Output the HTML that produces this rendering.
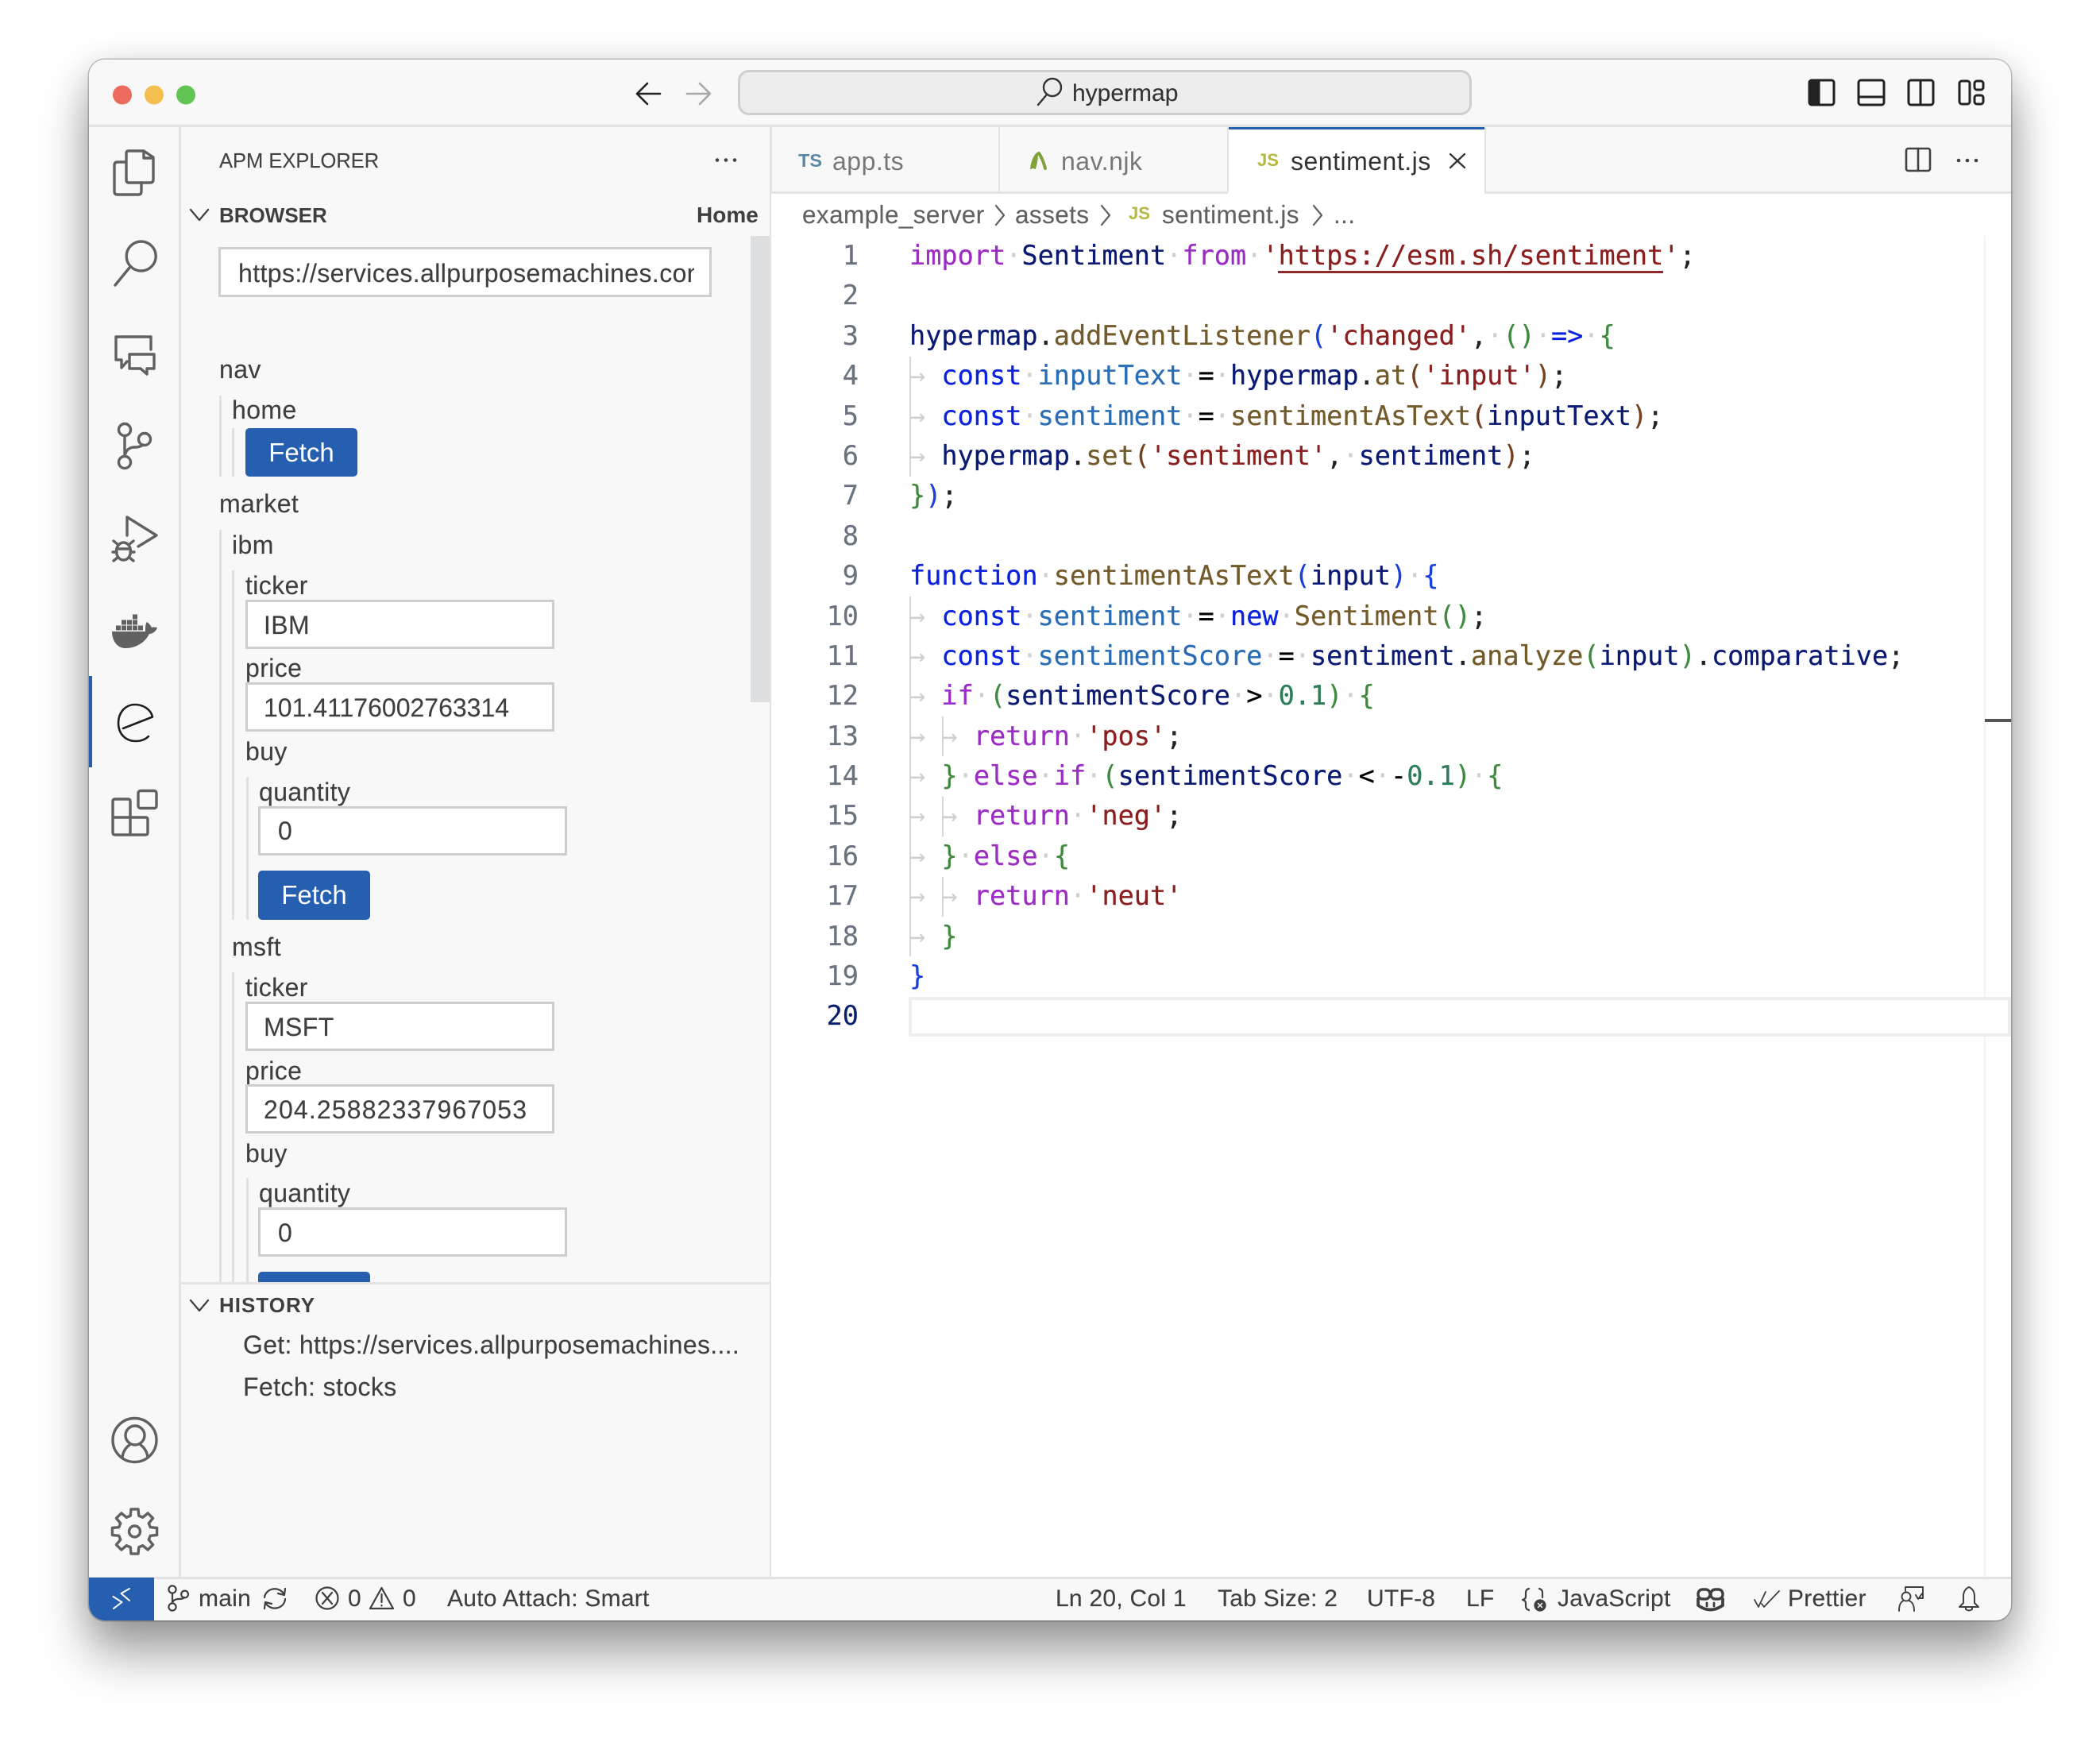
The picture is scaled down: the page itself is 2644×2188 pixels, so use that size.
<!DOCTYPE html>
<html><head><meta charset="utf-8"><title>hypermap</title>
<style>
html,body{margin:0;padding:0;background:#fff;width:2644px;height:2188px;overflow:hidden}
body{position:relative;font-family:"Liberation Sans",sans-serif;color:#3f3f3f}
#shadow{position:absolute;left:112px;top:75px;width:2420px;height:1965px;border-radius:20px;background:#f8f8f8;
box-shadow:0 0 0 1.5px rgba(0,0,0,.22),0 42px 62px rgba(0,0,0,.36),0 6px 44px rgba(0,0,0,.15)}
#win{position:absolute;left:0;top:0;width:2644px;height:2188px;clip-path:inset(75px 112px 148px 112px round 20px)}
.a{position:absolute}
.t{position:absolute;white-space:pre;line-height:40px;height:40px;margin-top:-20px;font-size:32px;letter-spacing:.4px;color:#3f3f3f;-webkit-text-stroke:.15px #3f3f3f}
.i{position:absolute;background:#fff;border:3px solid #cecece;box-sizing:border-box}
.l{position:absolute;width:2.5px;background:#e0e0e0}
.btn{position:absolute;background:#265fb0;border-radius:5px;color:#fff;font-size:33px;text-align:center;overflow:hidden}
.h{font-weight:bold;font-size:26px;letter-spacing:0;-webkit-text-stroke:0}
.st{font-size:30px;letter-spacing:.25px}
.bc{font-size:31.5px;color:#616161;letter-spacing:.4px;-webkit-text-stroke:.15px #616161}
.tb{font-size:32px;letter-spacing:.5px;color:#777;-webkit-text-stroke:0}
.ic{font-weight:bold;letter-spacing:0;-webkit-text-stroke:0}
#code{position:absolute;left:1145px;top:297px;font-family:"DejaVu Sans Mono","Liberation Mono",monospace;font-size:33.55px;line-height:50.4px;white-space:pre;color:#222;-webkit-text-stroke:.25px}
#code div{height:50.4px}
#nums{position:absolute;left:1000px;width:81px;top:297px;text-align:right;font-family:"DejaVu Sans Mono","Liberation Mono",monospace;font-size:33.55px;line-height:50.4px;color:#6b7380;-webkit-text-stroke:.2px}
#nums div{height:50.4px}
i{font-style:normal}
.k{color:#9b2cc4}.b{color:#0a22dc}.n{color:#0a1a72}.c{color:#2a6db5}.f{color:#725a2a}.s{color:#8b1f1f}.g{color:#3f8a3f}.u{color:#1a3fdc}.r{color:#75401f}.o{color:#000}.d{color:#cfcfcf;-webkit-text-stroke:0}.m{color:#2e7d5a}
svg{position:absolute;left:0;top:0}
</style></head><body>
<div id="shadow"></div>
<div id="win">
<div class="a" style="left:112px;top:75px;width:2420px;height:1965px;background:#f8f8f8"></div>
<!-- title bar border -->
<div class="a" style="left:112px;top:157px;width:2420px;height:3px;background:#e4e4e4"></div>
<div class="a" style="left:929px;top:88px;width:924px;height:57px;background:#ededed;border:3px solid #cfcfcf;border-radius:14px;box-sizing:border-box"></div>
<div class="t" style="left:1350px;top:117.5px;font-size:30px;letter-spacing:0;color:#333">hypermap</div>

<!-- structure -->
<div class="a" style="left:225px;top:160px;width:2.5px;height:1826px;background:#e4e4e4"></div>
<div class="a" style="left:969px;top:160px;width:2.5px;height:1826px;background:#e4e4e4"></div>
<div class="a" style="left:971px;top:243px;width:1561px;height:1743px;background:#fff"></div>
<div class="a" style="left:971px;top:241px;width:1561px;height:3px;background:#e4e4e4"></div>
<div class="a" style="left:1546px;top:160px;width:323px;height:84px;background:#fff"></div>
<div class="a" style="left:1546px;top:160px;width:323px;height:3px;background:#265fb0"></div>
<div class="a" style="left:1257px;top:160px;width:2px;height:82px;background:#e4e4e4"></div>
<div class="a" style="left:1545px;top:160px;width:2px;height:82px;background:#e4e4e4"></div>
<div class="a" style="left:1869px;top:160px;width:2px;height:82px;background:#e4e4e4"></div>

<!-- tabs -->
<div class="t ic" style="left:1005px;top:202px;font-size:23.5px;color:#5a87a3">TS</div>
<div class="t tb" style="left:1048px;top:203px">app.ts</div>
<div class="t tb" style="left:1336px;top:203px">nav.njk</div>
<div class="t ic" style="left:1583px;top:202px;font-size:22px;color:#b5b83c">JS</div>
<div class="t tb" style="left:1625px;top:203px;color:#333">sentiment.js</div>

<!-- breadcrumbs -->
<div class="t bc" style="left:1010px;top:270px">example_server</div>
<div class="t bc" style="left:1278px;top:270px">assets</div>
<div class="t ic" style="left:1421px;top:269px;font-size:22px;color:#b5b83c">JS</div>
<div class="t bc" style="left:1463px;top:270px">sentiment.js</div>
<div class="t bc" style="left:1679px;top:270px">...</div>

<!-- sidebar -->
<div class="t" style="left:276px;top:203px;font-size:25.5px;letter-spacing:0;color:#444">APM EXPLORER</div>
<div class="t h" style="left:276px;top:271px">BROWSER</div>
<div class="t h" style="left:877px;top:271px;font-size:28px">Home</div>
<div class="a" style="left:945px;top:297px;width:24px;height:587px;background:#dedfe1"></div>

<div class="i" style="left:275px;top:311px;width:621px;height:63px"></div>
<div class="a" style="left:300px;top:320px;width:574px;height:46px;overflow:hidden"><div class="t" style="left:0;top:23.5px">https://services.allpurposemachines.com/</div></div>

<div class="t" style="left:276px;top:465px">nav</div>
<div class="l" style="left:276px;top:498px;height:102px"></div>
<div class="t" style="left:292px;top:516px">home</div>
<div class="l" style="left:292px;top:539px;height:61px"></div>
<div class="btn" style="left:309px;top:539px;width:141px;height:61px;line-height:61px">Fetch</div>
<div class="t" style="left:276px;top:634px">market</div>
<div class="l" style="left:276px;top:667px;height:947px"></div>
<div class="t" style="left:292px;top:686px">ibm</div>
<div class="l" style="left:292px;top:718px;height:440px"></div>
<div class="t" style="left:309px;top:737px">ticker</div>
<div class="i" style="left:309px;top:755px;width:389px;height:62px"></div>
<div class="t" style="left:332px;top:787px">IBM</div>
<div class="t" style="left:309px;top:841px">price</div>
<div class="i" style="left:309px;top:859px;width:389px;height:62px"></div>
<div class="t" style="left:332px;top:891px;letter-spacing:0">101.41176002763314</div>
<div class="t" style="left:309px;top:946px">buy</div>
<div class="l" style="left:310px;top:978px;height:180px"></div>
<div class="t" style="left:326px;top:997px">quantity</div>
<div class="i" style="left:325px;top:1015px;width:389px;height:62px"></div>
<div class="t" style="left:350px;top:1046px">0</div>
<div class="btn" style="left:325px;top:1096px;width:141px;height:62px;line-height:62px">Fetch</div>
<div class="t" style="left:292px;top:1192px">msft</div>
<div class="l" style="left:292px;top:1224px;height:390px"></div>
<div class="t" style="left:309px;top:1243px">ticker</div>
<div class="i" style="left:309px;top:1261px;width:389px;height:62px"></div>
<div class="t" style="left:332px;top:1293px">MSFT</div>
<div class="t" style="left:309px;top:1348px">price</div>
<div class="i" style="left:309px;top:1365px;width:389px;height:62px"></div>
<div class="t" style="left:332px;top:1397px;letter-spacing:1.15px">204.25882337967053</div>
<div class="t" style="left:309px;top:1452px">buy</div>
<div class="l" style="left:310px;top:1483px;height:131px"></div>
<div class="t" style="left:326px;top:1502px">quantity</div>
<div class="i" style="left:325px;top:1520px;width:389px;height:62px"></div>
<div class="t" style="left:350px;top:1552px">0</div>
<div class="btn" style="left:325px;top:1601px;width:141px;height:13px;border-radius:5px 5px 0 0"></div>

<div class="a" style="left:226px;top:1614px;width:744px;height:3px;background:#e4e4e4"></div>
<div class="t h" style="left:276px;top:1643px;letter-spacing:1px">HISTORY</div>
<div class="t" style="left:306px;top:1693px;letter-spacing:.3px">Get: https://services.allpurposemachines....</div>
<div class="t" style="left:306px;top:1746px">Fetch: stocks</div>

<!-- code -->
<div class="a" style="left:2498px;top:297px;width:2px;height:1689px;background:#f4f4f4"></div>
<div class="a" style="left:1144px;top:1255px;width:1388px;height:50px;border:4px solid #eeeeee;box-sizing:border-box;background:#fff"></div>
<div class="a" style="left:2499px;top:905px;width:33px;height:4px;background:#555"></div>
<div class="a" style="left:1145px;top:448.6px;width:2px;height:151.2px;background:#d6d6d6"></div>
<div class="a" style="left:1145px;top:750.8px;width:2px;height:453.6px;background:#d6d6d6"></div>
<div class="a" style="left:1185.5px;top:902px;width:2px;height:50.4px;background:#d6d6d6"></div>
<div class="a" style="left:1185.5px;top:1002.8px;width:2px;height:50.4px;background:#d6d6d6"></div>
<div class="a" style="left:1185.5px;top:1103.6px;width:2px;height:50.4px;background:#d6d6d6"></div>
<div class="a" style="left:1609px;top:341px;width:485px;height:3px;background:#8f2a2a"></div>

<div id="nums"><div>1</div><div>2</div><div>3</div><div>4</div><div>5</div><div>6</div><div>7</div><div>8</div><div>9</div><div>10</div><div>11</div><div>12</div><div>13</div><div>14</div><div>15</div><div>16</div><div>17</div><div>18</div><div>19</div><div style="color:#0b216f">20</div></div>
<div id="code"><div><i class="k">import</i><i class="d">·</i><i class="n">Sentiment</i><i class="d">·</i><i class="k">from</i><i class="d">·</i><i class="s">'https://esm.sh/sentiment'</i>;</div><div> </div><div><i class="n">hypermap</i>.<i class="f">addEventListener</i><i class="u">(</i><i class="s">'changed'</i>,<i class="d">·</i><i class="g">()</i><i class="d">·</i><i class="b">=&gt;</i><i class="d">·</i><i class="g">{</i></div><div><i class="d">→ </i><i class="b">const</i><i class="d">·</i><i class="c">inputText</i><i class="d">·</i><i class="o">=</i><i class="d">·</i><i class="n">hypermap</i>.<i class="f">at</i><i class="r">(</i><i class="s">'input'</i><i class="r">)</i>;</div><div><i class="d">→ </i><i class="b">const</i><i class="d">·</i><i class="c">sentiment</i><i class="d">·</i><i class="o">=</i><i class="d">·</i><i class="f">sentimentAsText</i><i class="r">(</i><i class="n">inputText</i><i class="r">)</i>;</div><div><i class="d">→ </i><i class="n">hypermap</i>.<i class="f">set</i><i class="r">(</i><i class="s">'sentiment'</i>,<i class="d">·</i><i class="n">sentiment</i><i class="r">)</i>;</div><div><i class="g">}</i><i class="u">)</i>;</div><div> </div><div><i class="b">function</i><i class="d">·</i><i class="f">sentimentAsText</i><i class="u">(</i><i class="n">input</i><i class="u">)</i><i class="d">·</i><i class="u">{</i></div><div><i class="d">→ </i><i class="b">const</i><i class="d">·</i><i class="c">sentiment</i><i class="d">·</i><i class="o">=</i><i class="d">·</i><i class="b">new</i><i class="d">·</i><i class="f">Sentiment</i><i class="g">()</i>;</div><div><i class="d">→ </i><i class="b">const</i><i class="d">·</i><i class="c">sentimentScore</i><i class="d">·</i><i class="o">=</i><i class="d">·</i><i class="n">sentiment</i>.<i class="f">analyze</i><i class="g">(</i><i class="n">input</i><i class="g">)</i>.<i class="n">comparative</i>;</div><div><i class="d">→ </i><i class="k">if</i><i class="d">·</i><i class="g">(</i><i class="n">sentimentScore</i><i class="d">·</i><i class="o">&gt;</i><i class="d">·</i><i class="m">0.1</i><i class="g">)</i><i class="d">·</i><i class="g">{</i></div><div><i class="d">→ → </i><i class="k">return</i><i class="d">·</i><i class="s">'pos'</i>;</div><div><i class="d">→ </i><i class="g">}</i><i class="d">·</i><i class="k">else</i><i class="d">·</i><i class="k">if</i><i class="d">·</i><i class="g">(</i><i class="n">sentimentScore</i><i class="d">·</i><i class="o">&lt;</i><i class="d">·</i><i class="o">-</i><i class="m">0.1</i><i class="g">)</i><i class="d">·</i><i class="g">{</i></div><div><i class="d">→ → </i><i class="k">return</i><i class="d">·</i><i class="s">'neg'</i>;</div><div><i class="d">→ </i><i class="g">}</i><i class="d">·</i><i class="k">else</i><i class="d">·</i><i class="g">{</i></div><div><i class="d">→ → </i><i class="k">return</i><i class="d">·</i><i class="s">'neut'</i></div><div><i class="d">→ </i><i class="g">}</i></div><div><i class="u">}</i></div></div>

<!-- status bar -->
<div class="a" style="left:112px;top:1985px;width:2420px;height:3px;background:#e2e2e2"></div>
<div class="a" style="left:112px;top:1986px;width:82px;height:54px;background:#265fb0"></div>
<div class="t st" style="left:250px;top:2013px">main</div>
<div class="t st" style="left:438px;top:2013px">0</div>
<div class="t st" style="left:507px;top:2013px">0</div>
<div class="t st" style="left:563px;top:2013px">Auto Attach: Smart</div>
<div class="t st" style="left:1329px;top:2013px">Ln 20, Col 1</div>
<div class="t st" style="left:1533px;top:2013px">Tab Size: 2</div>
<div class="t st" style="left:1721px;top:2013px">UTF-8</div>
<div class="t st" style="left:1846px;top:2013px">LF</div>
<div class="t st" style="left:1961px;top:2013px">JavaScript</div>
<div class="t st" style="left:2251px;top:2013px">Prettier</div>

<svg width="2644" height="2188" viewBox="0 0 2644 2188" fill="none" stroke-linecap="round" stroke-linejoin="round">
<!-- traffic lights -->
<circle cx="154" cy="119.5" r="12" fill="#ec6a5e"/><circle cx="194" cy="119.5" r="12" fill="#f4bf4f"/><circle cx="234" cy="119.5" r="12" fill="#61c554"/>
<!-- nav arrows -->
<path d="M831 118H803M815 105L802 118L815 131" stroke="#222" stroke-width="2.6"/>
<path d="M865 118H893M881 105L894 118L881 131" stroke="#a8a8a8" stroke-width="2.6"/>
<!-- title search -->
<circle cx="1325" cy="110" r="11" stroke="#333" stroke-width="2.4"/><path d="M1318 119L1307 132" stroke="#333" stroke-width="2.4"/>
<!-- layout icons -->
<g stroke="#222" stroke-width="3">
<rect x="2278" y="101" width="31" height="31" rx="3"/><path d="M2279 102H2290V131H2279Z" fill="#222"/>
<rect x="2340" y="101" width="32" height="31" rx="3"/><path d="M2340 122H2372"/>
<rect x="2403" y="101" width="31" height="31" rx="3"/><path d="M2418 101V132"/>
<rect x="2467" y="102" width="13" height="29" rx="3"/><rect x="2486" y="102" width="11" height="11" rx="3"/><rect x="2486" y="120" width="11" height="11" rx="3"/>
</g>
<!-- editor actions -->
<g stroke="#424242" stroke-width="2.6"><rect x="2400" y="187" width="30" height="28" rx="2.5"/><path d="M2415 187V215"/></g>
<g fill="#424242"><circle cx="2466" cy="202" r="2.3"/><circle cx="2477" cy="202" r="2.3"/><circle cx="2488" cy="202" r="2.3"/>
<circle cx="903" cy="201.5" r="2.3"/><circle cx="914" cy="201.5" r="2.3"/><circle cx="925" cy="201.5" r="2.3"/></g>
<path d="M1826 194L1844 211M1844 194L1826 211" stroke="#333" stroke-width="2.3"/>
<!-- njk -->
<path d="M1298 212Q1300 198 1306 193Q1306 203 1303 212" fill="#7fa33a" stroke="#7fa33a" stroke-width="2"/>
<path d="M1308 193Q1313 200 1316 212" stroke="#7fa33a" stroke-width="4"/>
<!-- breadcrumb chevrons -->
<g stroke="#616161" stroke-width="2.2"><path d="M1254 259L1264 271L1254 283"/><path d="M1387 259L1397 271L1387 283"/><path d="M1654 259L1664 271L1654 283"/></g>
<!-- section chevrons -->
<g stroke="#424242" stroke-width="2.3"><path d="M240 264L251 277L262 264"/><path d="M240 1637L251 1650L262 1637"/></g>

<!-- activity bar -->
<g stroke="#616161" stroke-width="3.4">
<path d="M158 204H148Q144 204 144 208V241Q144 245 148 245H174Q178 245 178 241V230"/>
<path d="M181 190H162Q159 190 159 193V226Q159 230 162 230H189Q193 230 193 226V198ZM181 190V199H193"/>
<circle cx="177.7" cy="322.5" r="18.5"/><path d="M163 337L145 359"/>
<path d="M190 440V424H146V453H153V463L160 455"/>
<path d="M163 446H194V464H185V471L177 464H163Z"/>
<circle cx="157" cy="541" r="7.5"/><circle cx="182" cy="553" r="7.5"/><circle cx="157" cy="582" r="7.5"/>
<path d="M157 549V574M158 571Q160 564 168 563H172Q178 562 180 560"/>
<path d="M160 674V651L197 674L174 688"/>
<ellipse cx="155.5" cy="694" rx="9" ry="11"/><path d="M147 691H164M143 681L149 686M168 681L162 686M142 695H147M169 695H164M143 706L148 702M168 706L163 702"/>
<rect x="174" y="995.5" width="23" height="22" rx="3"/>
<path d="M164 1029V1009Q164 1006 161 1006H145Q142 1006 142 1009V1048Q142 1051 145 1051H183Q186 1051 186 1048V1032Q186 1029 183 1029H142M164 1029V1051"/>
<circle cx="169.5" cy="1813" r="27.5"/><ellipse cx="170" cy="1807" rx="12" ry="12"/>
<path d="M154 1835Q155 1825 163 1819M186 1835Q185 1825 177 1819"/>
<g transform="translate(169.5 1928)"><path d="M-5.3 -19.8L-4.5 -28.1L4.5 -28.1L5.3 -19.8L10.25 -17.75L16.69 -23.05L23.05 -16.69L17.75 -10.25L19.8 -5.3L28.1 -4.5L28.1 4.5L19.8 5.3L17.75 10.25L23.05 16.69L16.69 23.05L10.25 17.75L5.3 19.8L4.5 28.1L-4.5 28.1L-5.3 19.8L-10.25 17.75L-16.69 23.05L-23.05 16.69L-17.75 10.25L-19.8 5.3L-28.1 4.5L-28.1 -4.5L-19.8 -5.3L-17.75 -10.25L-23.05 -16.69L-16.69 -23.05L-10.25 -17.75Z"/><circle r="7"/></g>
</g>
<!-- docker -->
<g fill="#616161"><path d="M141 795H183C183 790 183 785 185 783C188 785 190 788 191 790C194 789 196 790 198 790C196 796 191 798 188 798C182 810 170 816 158 816C147 816 141 806 141 795Z"/>
<rect x="146" y="787.5" width="6" height="6"/><rect x="153" y="787.5" width="6" height="6"/><rect x="160" y="787.5" width="6" height="6"/><rect x="167" y="787.5" width="6" height="6"/><rect x="174" y="787.5" width="6" height="6"/>
<rect x="153" y="780.5" width="6" height="6"/><rect x="160" y="780.5" width="6" height="6"/><rect x="167" y="780.5" width="6" height="6"/><rect x="167" y="773.5" width="6" height="6"/></g>
<!-- e / active -->
<rect x="112" y="851" width="4" height="115" fill="#265fb0"/>
<path d="M155 917L192 902.5C190 893 180 887 170 887C157 887 149 898 149 910C149 924 158 933 171 933C178 933 183 931 187 927" stroke="#1e1e1e" stroke-width="2.6"/>

<!-- status icons -->
<path d="M142.5 2010L153.5 2017L143 2025M163 2000L152.5 2006L163 2015" stroke="#fff" stroke-width="2"/>
<g stroke="#3f3f3f" stroke-width="2.2">
<circle cx="217" cy="2001" r="4.6"/><circle cx="232.6" cy="2007" r="4.4"/><circle cx="217" cy="2023" r="4.6"/>
<path d="M217 2006V2018M218 2016Q220 2013 225 2013Q231 2013 232 2011"/>
<path d="M333 2011A13 12 0 0 1 357 2006M359 2013A13 12 0 0 1 335 2019M359 2000L358 2008L350 2006M333 2025L334 2017L342 2019"/>
<circle cx="412" cy="2012" r="13.5"/><path d="M406 2005L418 2019M418 2005L406 2019"/>
<path d="M480.5 1999L495 2025H466Z"/><path d="M480.5 2007V2017M480.5 2021V2021.5"/>
<path d="M1925 2000Q1921 2001 1921 2005V2010Q1921 2013 1917 2014Q1921 2015 1921 2018V2022Q1921 2026 1925 2027M1938 2000Q1942 2001 1942 2005V2011"/>
<circle cx="1939" cy="2021" r="6.5" fill="#3f3f3f"/><path d="M1936.5 2018.5L1941.5 2023.5M1941.5 2018.5L1936.5 2023.5" stroke="#f8f8f8" stroke-width="1.5"/>
<rect x="2138" y="2001" width="15" height="12" rx="5.5" stroke-width="3.4"/><rect x="2154" y="2001" width="15" height="12" rx="5.5" stroke-width="3.4"/>
<path d="M2138 2013V2021Q2153 2032 2169 2021V2013" stroke-width="3.8"/>
<path d="M2149 2018V2022M2158 2018V2022" stroke-width="2.8"/>
<path d="M2209 2014L2214 2023L2223 2004M2218 2019L2221 2023L2240 2003" stroke-width="1.8"/>
<path d="M2399 2003V1998H2421V2012H2416M2412 2008L2415 2013L2421 2005" stroke-width="1.9"/>
<circle cx="2400" cy="2010" r="5.5" stroke-width="1.9"/><path d="M2391 2028Q2391 2017 2397 2015M2410 2028Q2410 2017 2403 2015" stroke-width="1.9"/>
<path d="M2479 1998Q2472 2001 2472 2010V2018L2467 2023H2491L2486 2018V2010Q2486 2001 2479 1998ZM2475 2023V2026Q2479 2029 2483 2026V2023" stroke-width="2"/>
</g>
</svg>
</div>
</body></html>
